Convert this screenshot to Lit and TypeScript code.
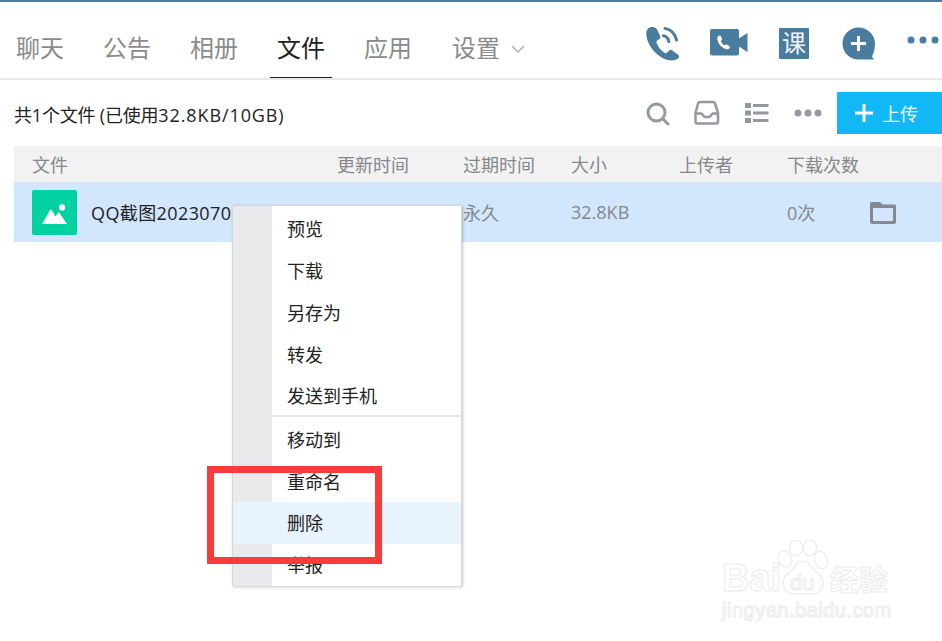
import { LitElement, html, css, svg } from "lit";
import { customElement } from "lit/decorators.js";

const C = "#4a7c9f";
const G = "#96989f";

const phone = svg`<svg width="36" height="35" viewBox="0 0 36 36"><path fill="${C}" d="M6 1C3 1.500.8 4 .8 7.500c0 7 3.700 14 9 19.500 5 5 11 8.500 17.500 8.500 3 0 6.500-1.500 7.200-3.500.4-1-.2-2-1.200-2.700l-6-4.300c-1-.7-2.200-.6-3 .3l-2.300 2.200c-.7.600-1.500.6-2.200.2-2-1.200-4-3.200-5.500-5.200-1.300-1.800-2.400-3.600-3-5.500-.2-.8 0-1.500.7-2l2.300-1.500c1-.7 1.300-1.800.8-2.900L12 3.500C11 1.500 8.500.6 6 1z"/><path fill="none" stroke="${C}" stroke-width="3" stroke-linecap="round" d="M18.500 10c3 .7 5 3 5.500 6M20 2.500c6 1.200 10.500 5.500 12 12"/></svg>`;
const video = svg`<svg width="38" height="27" viewBox="0 0 38 27"><rect x="0" y="0" width="29" height="26.500" rx="2" fill="${C}"/><path fill="${C}" d="M28 10l9.500-6v19L28 17z"/><path fill="#fff" d="M9.500 6.500c-1.500.4-2.300 1.500-2.200 3 .3 3 1.500 5.500 3.500 7.600 2 2 4.200 3.200 6.500 3.200 1.300 0 2.300-.9 2.600-1.800.1-.5 0-.9-.4-1.200l-2.500-1.700c-.4-.3-.9-.2-1.300.1l-.8.800c-1.700-.7-3.500-2.700-4.200-4.500l1-.7c.4-.3.5-.8.4-1.200L10.900 7c-.2-.4-.8-.7-1.400-.5z"/></svg>`;
const addBubble = svg`<svg width="34" height="33" viewBox="0 0 34 33"><path fill="${C}" d="M16.500.5C7.600.5.500 7.600.5 16.500S7.600 32.500 16.500 32.500H33c-1.800-.6-3-2-2.900-3.500 1.800-3 2.900-6.700 2.900-12.500C33 7.600 25.400.5 16.500.5z"/><path fill="#fff" d="M15 9h3v6h6v3h-6v6h-3v-6H9v-3h6z"/></svg>`;
const dots = (c: string, w = 30) => svg`<svg width="${w}" height="8" viewBox="0 0 ${w} 8"><circle cx="4" cy="4" r="3.500" fill="${c}"/><circle cx="${w / 2}" cy="4" r="3.500" fill="${c}"/><circle cx="${w - 4}" cy="4" r="3.500" fill="${c}"/></svg>`;
const search = svg`<svg width="24" height="24" viewBox="0 0 24 24"><circle cx="10.500" cy="10.500" r="8.500" fill="none" stroke="${G}" stroke-width="3"/><path d="M17 17l5 5" stroke="${G}" stroke-width="3" stroke-linecap="round"/></svg>`;
const inbox = svg`<svg width="26" height="26" viewBox="0 0 26 26"><path fill="none" stroke="${G}" stroke-width="2.500" stroke-linejoin="round" d="M6 2h13c1 0 1.700.6 2 1.500L24 13v8.500a2 2 0 0 1-2 2H3.500a2 2 0 0 1-2-2V13L4 3.500C4.300 2.600 5 2 6 2z"/><path fill="none" stroke="${G}" stroke-width="2.500" stroke-linejoin="round" d="M2 13.500h5.500l3 3.500h5l3-3.500H24"/></svg>`;
const list = svg`<svg width="24" height="22" viewBox="0 0 24 22"><g fill="${G}"><rect x="0" y="1" width="6" height="5"/><rect x="8" y="2" width="15.500" height="3"/><rect x="0" y="8.500" width="6" height="5"/><rect x="8" y="9.500" width="15.500" height="3"/><rect x="0" y="16" width="6" height="5"/><rect x="8" y="17" width="15.500" height="3"/></g></svg>`;
const picture = svg`<svg width="45" height="45" viewBox="0 0 45 45"><rect width="45" height="45" rx="2" fill="#00d1a0"/><circle cx="30" cy="17.500" r="3.200" fill="#fff"/><path fill="#fff" d="M10 34l8-14c.5-.8 1.200-.8 1.700 0l3.800 6.500 2.300-3.500c.5-.7 1.200-.7 1.700 0L35 34z"/></svg>`;
const folder = svg`<svg width="26" height="23" viewBox="0 0 26 23"><path fill="none" stroke="#85888f" stroke-width="3" stroke-linejoin="round" d="M1.500 2.500h8l2 2.500h13v15.500a1 1 0 0 1-1 1h-21a1 1 0 0 1-1-1z"/><path fill="#85888f" d="M1 2h9l2.500 3.500H25V7H1z"/></svg>`;
const chevron = svg`<svg width="14" height="8" viewBox="0 0 14 8"><path d="M1 1l6 6 6-6" fill="none" stroke="#aeb0b4" stroke-width="1.500"/></svg>`;
const paw = svg`<svg width="52" height="56" viewBox="0 0 52 56"><g fill="none" stroke="#ececec" stroke-width="1.200"><ellipse cx="8" cy="19" rx="6.500" ry="8.500" transform="rotate(-25 8 19)"/><ellipse cx="19" cy="8" rx="6.500" ry="8"/><ellipse cx="33" cy="8" rx="6.500" ry="8"/><ellipse cx="44" cy="20" rx="6.500" ry="9" transform="rotate(-25 44 20)"/><path d="M26 21c-5 0-7 4-11 9-5 3-9 8-9 14 0 6 5 10 11 10h18c6 0 11-4 11-10 0-6-4-11-9-14-4-5-6-9-11-9z"/></g></svg>`;

const tabs = ["聊天", "公告", "相册", "文件", "应用"];
const menuA = ["预览", "下载", "另存为", "转发", "发送到手机"];
const menuB = ["移动到", "重命名", "删除", "举报"];

@customElement("app-root")
export class AppRoot extends LitElement {
  static styles = css`
    :host {
      display: block;
      width: 942px;
      height: 641px;
      position: relative;
      overflow: hidden;
      background: #fff;
      font-family: "Open Sans", "Noto Sans CJK SC", sans-serif;
      color: #222;
    }
    .accent { height: 2px; background: #4a7c9f; }
    .top {
      height: 76px;
      border-bottom: 2px solid #e8e8e8;
      display: flex;
      justify-content: space-between;
    }
    .tabs { display: flex; gap: 25px; padding: 26px 0 0 9px; }
    .tab {
      width: 62px;
      height: 50px;
      text-align: center;
      font-size: 24px;
      line-height: 39px;
      color: #8b8b8b;
      box-sizing: border-box;
    }
    .tab.on { color: #222; border-bottom: 1px solid #222; }
    .tab.more {
      width: auto;
      padding-left: 8px;
      display: flex;
      align-items: flex-start;
      gap: 11px;
    }
    .tab.more svg { margin-top: 17px; }
    .actions { display: flex; align-items: flex-start; padding-right: 3px; }
    .actions svg { display: block; }
    .a1 { margin: 24px 0 0 0; }
    .a2 { margin: 27px 0 0 29px; }
    .a3 {
      margin: 26px 0 0 31px;
      width: 30px;
      height: 31px;
      background: #4a7c9f;
      border-radius: 1px;
      color: #f2f6f9;
      font-size: 24px;
      line-height: 29px;
      text-align: center;
    }
    .a4 { margin: 25px 0 0 33px; }
    .a5 { margin: 34px 0 0 31px; }
    .bar {
      height: 66px;
      display: flex;
      align-items: center;
      font-size: 18px;
      color: #222;
      padding-left: 14px;
    }
    .bar .count { flex: 1; margin-top: 1px; white-space: nowrap; }
    .lead { letter-spacing: -0.200px; }
    .figures { letter-spacing: 0.900px; }
    .tools { display: flex; align-items: center; align-self: flex-start; margin-top: 12px; }
    .tools svg { display: block; }
    .t1 { margin-right: 24px; margin-top: 2px; }
    .t2 { margin-right: 25px; }
    .t3 { margin-right: 25px; }
    .t4 { margin-right: 15px; }
    .upload {
      width: 105px;
      height: 42px;
      background: #12b7f5;
      color: #e8f7fe;
      display: flex;
      align-items: center;
      font-size: 18px;
      gap: 9px;
      padding-left: 18px;
      box-sizing: border-box;
    }
    .plus { width: 18px; height: 18px; display: block; }
    .table { margin-left: 14px; }
    .row {
      display: grid;
      grid-template-columns: 305px 126px 108px 108px 108px 1fr;
      padding-left: 18px;
      align-items: center;
      font-size: 18px;
    }
    .head { height: 36px; background: #f2f2f2; color: #85878c; }
    .file { height: 60px; background: #d2e7fd; color: #85878c; }
    .name { display: flex; align-items: center; gap: 14px; color: #222; white-space: nowrap; overflow: hidden; letter-spacing: 0.400px; }
    .name svg { flex: none; display: block; }
    .dl { display: flex; align-items: center; gap: 55px; }
    .dl svg { display: block; flex: none; }
    .menu {
      position: absolute;
      left: 232px;
      top: 205px;
      width: 230px;
      height: 381px;
      box-sizing: border-box;
      border: 1px solid #d6d6d6;
      border-width: 1px 1px 0 1px;
      box-shadow: 1px 1px 3px rgba(0, 0, 0, 0.22);
      background: linear-gradient(to right, #e9eaec 39px, #fff 39px);
      padding-top: 1px;
      font-size: 18px;
      color: #222;
    }
    .item { height: 42px; line-height: 44px; padding-left: 54px; }
    .item.last { height: 40px; line-height: 42px; }
    .item.hot, .item.report { line-height: 42px; }
    .item.hot { background: #e8f3fd; }
    .sep { height: 2px; margin: 0 0 1px 39px; background: #e6e6e6; }
    .mark {
      position: absolute;
      left: 207px;
      top: 466px;
      width: 175px;
      height: 98px;
      box-sizing: border-box;
      border: 7px solid #fb3a3a;
    }
    .wm {
      position: absolute;
      left: 722px;
      top: 540px;
      width: 170px;
      height: 82px;
      color: transparent;
      -webkit-text-stroke: 1px #ececec;
      font-family: "Liberation Sans", sans-serif;
    }
    .wm .paw { position: absolute; left: 55px; top: 0; }
    .wm .b { position: absolute; left: 0; top: 16px; font-size: 38px; line-height: 44px; font-weight: 700; }
    .wm .d { position: absolute; left: 68px; top: 30px; font-size: 22px; line-height: 26px; }
    .wm .z {
      position: absolute;
      left: 108px;
      top: 20px;
      font-size: 29px;
      line-height: 36px;
      font-family: "Noto Sans CJK SC", sans-serif;
      font-weight: 700;
      white-space: nowrap;
    }
    .wm .u { position: absolute; left: 0; top: 58px; font-size: 20px; line-height: 24px; letter-spacing: 0.500px; white-space: nowrap; }
  `;

  render() {
    return html`
      <div class="accent"></div>
      <div class="top">
        <div class="tabs">
          ${tabs.map((t) => html`<div class="tab ${t === "文件" ? "on" : ""}">${t}</div>`)}
          <div class="tab more">设置 ${chevron}</div>
        </div>
        <div class="actions">
          <div class="a1">${phone}</div>
          <div class="a2">${video}</div>
          <div class="a3">课</div>
          <div class="a4">${addBubble}</div>
          <div class="a5">${dots(C, 32)}</div>
        </div>
      </div>
      <div class="bar">
        <div class="count"><span class="lead">共1个文件 (已使用</span><span class="figures">32.8KB/10GB)</span></div>
        <div class="tools">
          <div class="t1">${search}</div>
          <div class="t2">${inbox}</div>
          <div class="t3">${list}</div>
          <div class="t4">${dots(G, 28)}</div>
          <div class="upload">
            <svg class="plus" viewBox="0 0 18 18"><path fill="#fff" d="M7.500 0h3v7.500H18v3h-7.500V18h-3v-7.500H0v-3h7.500z"/></svg>
            上传
          </div>
        </div>
      </div>
      <div class="table">
        <div class="row head">
          <div>文件</div><div>更新时间</div><div>过期时间</div><div>大小</div><div>上传者</div><div>下载次数</div>
        </div>
        <div class="row file">
          <div class="name">${picture}<span>QQ截图20230705</span></div>
          <div></div>
          <div>永久</div>
          <div>32.8KB</div>
          <div></div>
          <div class="dl"><span>0次</span>${folder}</div>
        </div>
      </div>
      <div class="menu">
        ${menuA.map((m, i) => html`<div class="item ${i === 4 ? "last" : ""}">${m}</div>`)}
        <div class="sep"></div>
        ${menuB.map((m) => html`<div class="item ${m === "删除" ? "hot" : m === "举报" ? "report" : ""}">${m}</div>`)}
      </div>
      <div class="mark"></div>
      <div class="wm">
        <div class="paw">${paw}</div>
        <div class="b">Bai</div>
        <div class="d">du</div>
        <div class="z">经验</div>
        <div class="u">jingyan.baidu.com</div>
      </div>
    `;
  }
}
